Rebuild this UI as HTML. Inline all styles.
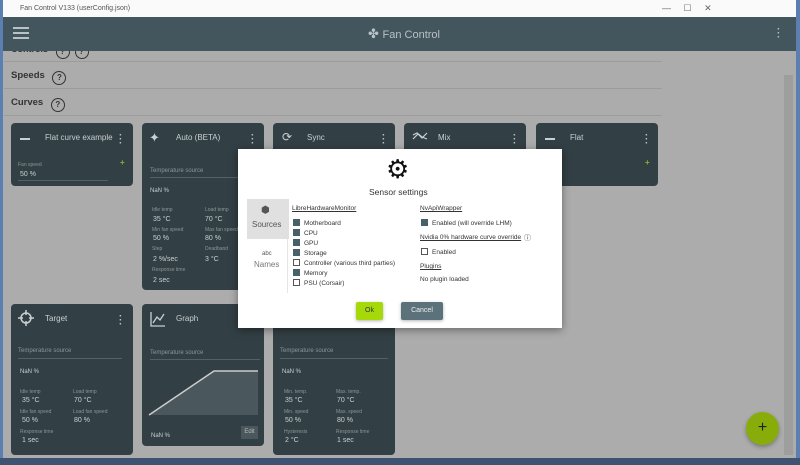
<!DOCTYPE html>
<html><head><meta charset="utf-8"><style>
*{box-sizing:border-box;margin:0;padding:0}
body{width:800px;height:465px;overflow:hidden;background:#5a7fb0;font-family:"Liberation Sans",sans-serif;position:relative}
.abs{position:absolute}
.win{left:3px;top:0;width:793px;height:458px;background:#acacac}
.title{left:3px;top:0;width:793px;height:17px;background:#fafafa;font-size:7px;color:#555;padding:5px 0 0 17px}
.bar{left:3px;top:17px;width:793px;height:34px;background:#43555d}
.card{background:#323f44;border-radius:4px}
.ct{color:#c9d0d2;font-size:8px}
.sm{color:#8c9699;font-size:5px}
.val{color:#c9d0d2;font-size:7px}
.ln{height:1px;background:#536165}
.plus{color:#8cb02a;font-size:8px;font-weight:bold}
.dots{color:#b8c0c2;font-size:10px;font-weight:bold;line-height:4px;width:3px}
.dlg{left:238px;top:149px;width:324px;height:179px;background:#fff;box-shadow:0 2px 8px rgba(0,0,0,.4)}
.d{font-size:6.5px;color:#333}
.cb{display:inline-block;width:7px;height:7px;border:1px solid #555;vertical-align:-1px;margin-right:4px;background:#fff}
.cb.on{background:#48606a;border-color:#48606a}
.u{text-decoration:underline;color:#333;font-size:6.5px}
.q{display:inline-block;width:14px;height:14px;border:1.5px solid #333;border-radius:50%;text-align:center;font-size:8px;line-height:11px;margin-left:5px;vertical-align:-2px}
</style></head><body>
<div class="abs" style="left:0;top:458px;width:800px;height:7px;background:#3e5272"></div>
<div class="abs win"></div>
<div class="abs title">Fan Control V133 (userConfig.json)</div>
<div class="abs" style="left:662px;top:3px;font-size:9px;color:#666">—&nbsp;&nbsp;&nbsp;&nbsp;&nbsp;☐&nbsp;&nbsp;&nbsp;&nbsp;&nbsp;✕</div>
<div class="abs" style="left:11px;top:44px;font-size:9px;font-weight:bold;color:#333">Controls <span class="q">?</span><span class="q">?</span></div>
<div class="abs bar"></div>
<div class="abs" style="left:13px;top:27px;width:16px;height:2px;background:#b8c2c6;box-shadow:0 5px 0 #b8c2c6,0 10px 0 #b8c2c6"></div>
<div class="abs" style="left:368px;top:26px;color:#b8c2c6;font-size:13px">✤ <span style="font-size:11px">Fan Control</span></div>
<div class="abs dots" style="left:777px;top:28px">·<br>·<br>·</div>
<div class="abs" style="left:784px;top:75px;width:9px;height:380px;background:#9e9e9e"></div>
<div class="abs ln" style="left:4px;top:61px;width:658px;background:#9c9c9c"></div>
<div class="abs ln" style="left:4px;top:88px;width:658px;background:#9c9c9c"></div>
<div class="abs ln" style="left:4px;top:115px;width:658px;background:#9c9c9c"></div>
<div class="abs" style="left:11px;top:70px;font-size:9.5px;font-weight:bold;color:#333">Speeds <span class="q">?</span></div>
<div class="abs" style="left:11px;top:97px;font-size:9.5px;font-weight:bold;color:#333">Curves <span class="q">?</span></div>

<!-- row1 -->
<div class="abs card" style="left:11px;top:123px;width:122px;height:63px"></div>
<div class="abs" style="left:20px;top:138px;width:10px;height:2px;background:#c9d0d2"></div>
<div class="abs ct" style="left:45px;top:133px">Flat curve example</div>
<div class="abs dots" style="left:119px;top:134px">·<br>·<br>·</div>
<div class="abs sm" style="left:18px;top:162px">Fan speed</div><div class="abs plus" style="left:120px;top:158px">+</div>
<div class="abs val" style="left:20px;top:171px">50 %</div><div class="abs ln" style="left:18px;top:180px;width:90px"></div>

<div class="abs card" style="left:142px;top:123px;width:122px;height:167px"></div>
<div class="abs ct" style="left:149px;top:130px;font-size:13px">✦</div>
<div class="abs ct" style="left:176px;top:133px">Auto (BETA)</div>
<div class="abs dots" style="left:251px;top:134px">·<br>·<br>·</div>
<div class="abs sm" style="left:150px;top:168px;font-size:6px">Temperature source</div><div class="abs ln" style="left:150px;top:177px;width:110px"></div>
<div class="abs val" style="left:150px;top:188px;font-size:6px">NaN %</div>
<div class="abs sm" style="left:152px;top:207px">Idle temp</div><div class="abs sm" style="left:205px;top:207px">Load temp</div>
<div class="abs val" style="left:153px;top:216px">35 °C</div><div class="abs val" style="left:205px;top:216px">70 °C</div>
<div class="abs sm" style="left:152px;top:227px">Min fan speed</div><div class="abs sm" style="left:205px;top:227px">Max fan speed</div>
<div class="abs val" style="left:153px;top:235px">50 %</div><div class="abs val" style="left:205px;top:235px">80 %</div>
<div class="abs sm" style="left:152px;top:246px">Step</div><div class="abs sm" style="left:205px;top:246px">Deadband</div>
<div class="abs val" style="left:153px;top:256px">2 %/sec</div><div class="abs val" style="left:205px;top:256px">3 °C</div>
<div class="abs sm" style="left:152px;top:267px">Response time</div>
<div class="abs val" style="left:153px;top:277px">2 sec</div>

<div class="abs card" style="left:273px;top:123px;width:122px;height:30px"></div>
<div class="abs ct" style="left:282px;top:130px;font-size:12px">⟳</div>
<div class="abs ct" style="left:307px;top:133px">Sync</div>
<div class="abs dots" style="left:382px;top:134px">·<br>·<br>·</div>
<div class="abs card" style="left:404px;top:123px;width:122px;height:30px"></div>
<svg class="abs" style="left:412px;top:131px" width="16" height="10"><path d="M1,8 L6,3 L10,7 L15,2 M1,4 L5,2 L10,6 L15,8" fill="none" stroke="#c9d0d2" stroke-width="1.2"/></svg>
<div class="abs ct" style="left:438px;top:133px">Mix</div>
<div class="abs dots" style="left:513px;top:134px">·<br>·<br>·</div>
<div class="abs card" style="left:536px;top:123px;width:122px;height:63px"></div>
<div class="abs" style="left:545px;top:138px;width:10px;height:2px;background:#c9d0d2"></div>
<div class="abs ct" style="left:570px;top:133px">Flat</div>
<div class="abs dots" style="left:645px;top:134px">·<br>·<br>·</div>
<div class="abs plus" style="left:645px;top:158px">+</div>

<!-- row2 -->
<div class="abs card" style="left:11px;top:304px;width:122px;height:151px"></div>
<svg class="abs" style="left:18px;top:310px" width="16" height="16"><circle cx="8" cy="8" r="5" fill="none" stroke="#c9d0d2" stroke-width="1.5"/><path d="M8,0V5M8,11V16M0,8H5M11,8H16" stroke="#c9d0d2" stroke-width="1.5"/></svg>
<div class="abs ct" style="left:45px;top:314px">Target</div>
<div class="abs dots" style="left:119px;top:315px">·<br>·<br>·</div>
<div class="abs sm" style="left:18px;top:348px;font-size:6px">Temperature source</div><div class="abs ln" style="left:18px;top:358px;width:104px"></div>
<div class="abs val" style="left:20px;top:369px;font-size:6px">NaN %</div>
<div class="abs sm" style="left:20px;top:389px">Idle temp</div><div class="abs sm" style="left:73px;top:389px">Load temp</div>
<div class="abs val" style="left:22px;top:397px">35 °C</div><div class="abs val" style="left:74px;top:397px">70 °C</div>
<div class="abs sm" style="left:20px;top:409px">Idle fan speed</div><div class="abs sm" style="left:73px;top:409px">Load fan speed</div>
<div class="abs val" style="left:22px;top:417px">50 %</div><div class="abs val" style="left:74px;top:417px">80 %</div>
<div class="abs sm" style="left:20px;top:429px">Response time</div>
<div class="abs val" style="left:22px;top:437px">1 sec</div>

<div class="abs card" style="left:142px;top:304px;width:122px;height:142px"></div>
<svg class="abs" style="left:150px;top:311px" width="16" height="16"><path d="M1,1V15H15M3,12L7,6L10,9L14,3" fill="none" stroke="#c9d0d2" stroke-width="1.3"/></svg>
<div class="abs ct" style="left:176px;top:314px">Graph</div>
<div class="abs sm" style="left:150px;top:350px;font-size:6px">Temperature source</div><div class="abs ln" style="left:150px;top:359px;width:110px"></div>
<svg class="abs" style="left:148px;top:368px" width="112" height="50"><polygon points="1,47 66,3 110,3 110,47" fill="#4a585d"/><polyline points="1,47 66,3 110,3" fill="none" stroke="#ccc" stroke-width="1.5"/></svg>
<div class="abs val" style="left:151px;top:433px;font-size:6px">NaN %</div>
<div class="abs" style="left:241px;top:426px;width:17px;height:13px;background:#4a585d;color:#bbb;font-size:6px;text-align:center;line-height:13px">Edit</div>

<div class="abs card" style="left:273px;top:320px;width:122px;height:135px"></div>
<div class="abs sm" style="left:280px;top:348px;font-size:6px">Temperature source</div><div class="abs ln" style="left:280px;top:358px;width:108px"></div>
<div class="abs val" style="left:282px;top:369px;font-size:6px">NaN %</div>
<div class="abs sm" style="left:284px;top:389px">Min. temp.</div><div class="abs sm" style="left:336px;top:389px">Max. temp.</div>
<div class="abs val" style="left:285px;top:397px">35 °C</div><div class="abs val" style="left:337px;top:397px">70 °C</div>
<div class="abs sm" style="left:284px;top:409px">Min. speed</div><div class="abs sm" style="left:336px;top:409px">Max. speed</div>
<div class="abs val" style="left:285px;top:417px">50 %</div><div class="abs val" style="left:337px;top:417px">80 %</div>
<div class="abs sm" style="left:284px;top:429px">Hysteresis</div><div class="abs sm" style="left:336px;top:429px">Response time</div>
<div class="abs val" style="left:285px;top:437px">2 °C</div><div class="abs val" style="left:337px;top:437px">1 sec</div>

<div class="abs" style="left:746px;top:412px;width:33px;height:33px;border-radius:50%;background:#88ad0b;color:#222;text-align:center;line-height:31px;font-size:16px;box-shadow:0 2px 4px rgba(0,0,0,.3)">+</div>

<!-- dialog -->
<div class="abs dlg"></div>
<div class="abs" style="left:386px;top:155px;font-size:26px;line-height:28px;color:#111">⚙</div>
<div class="abs" style="left:369px;top:187px;font-size:8.5px;color:#333">Sensor settings</div>
<div class="abs" style="left:247px;top:199px;width:42px;height:40px;background:#e0e0e0"></div>
<div class="abs" style="left:261px;top:205px;font-size:10px;color:#555">⬢</div>
<div class="abs" style="left:252px;top:220px;font-size:8px;color:#555">Sources</div>
<div class="abs" style="left:262px;top:251px;font-size:6px;color:#555">abc</div>
<div class="abs" style="left:254px;top:260px;font-size:8px;color:#777">Names</div>
<div class="abs" style="left:287px;top:239px;width:1px;height:54px;background:#e5e5e5"></div>
<div class="abs u" style="left:292px;top:205px">LibreHardwareMonitor</div>
<div class="abs d" style="left:293px;top:219px;line-height:10px"><span class="cb on"></span>Motherboard<br><span class="cb on"></span>CPU<br><span class="cb on"></span>GPU<br><span class="cb on"></span>Storage<br><span class="cb"></span>Controller (various third parties)<br><span class="cb on"></span>Memory<br><span class="cb"></span>PSU (Corsair)</div>
<div class="abs u" style="left:420px;top:205px">NvApiWrapper</div>
<div class="abs d" style="left:421px;top:219px"><span class="cb on"></span>Enabled (will override LHM)</div>
<div class="abs u" style="left:420px;top:234px">Nvidia 0% hardware curve override</div>
<div class="abs d" style="left:524px;top:233px;font-size:7px">ⓘ</div>
<div class="abs d" style="left:421px;top:248px"><span class="cb"></span>Enabled</div>
<div class="abs u" style="left:420px;top:263px">Plugins</div>
<div class="abs d" style="left:420px;top:276px">No plugin loaded</div>
<div class="abs" style="left:356px;top:302px;width:27px;height:18px;background:#a6d90a;border-radius:2px;font-size:7px;text-align:center;line-height:18px;color:#333;box-shadow:0 1px 3px rgba(0,0,0,.3)">Ok</div>
<div class="abs" style="left:401px;top:302px;width:42px;height:18px;background:#5c727b;border-radius:2px;font-size:7px;text-align:center;line-height:18px;color:#eee;box-shadow:0 1px 3px rgba(0,0,0,.3)">Cancel</div>
</body></html>
